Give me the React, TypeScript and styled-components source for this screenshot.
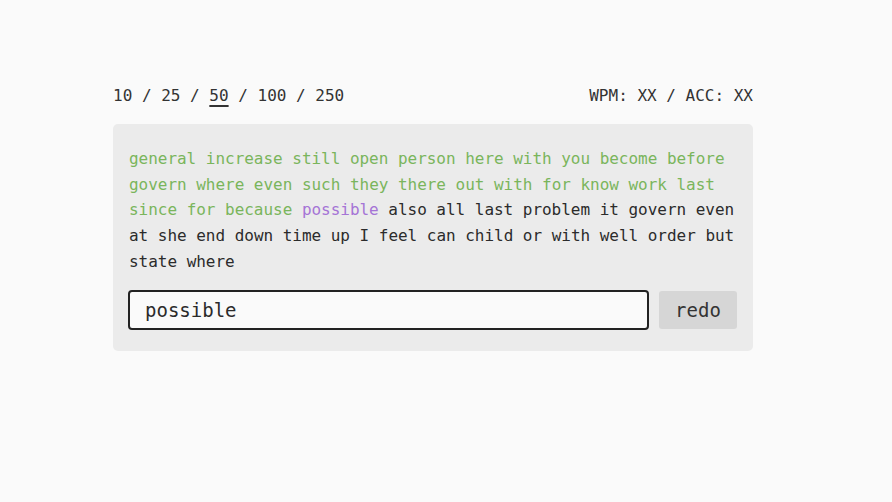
import React from "react";
import styled, { createGlobalStyle } from "styled-components";

const Global = createGlobalStyle`
  html, body { margin: 0; padding: 0; background: #fafafa; }
  body { font-family: "DejaVu Sans Mono", "Liberation Mono", monospace; color: #333; }
`;

const Page = styled.div`
  min-height: 502px;
  padding: 84px 0 0 113px;
  box-sizing: border-box;
`;

const Wrap = styled.div`
  width: 640px;
`;

const TopBar = styled.div`
  display: flex;
  justify-content: space-between;
  align-items: center;
  height: 24px;
  font-size: 16px;
  line-height: 24px;
  color: #333;
  margin-bottom: 16px;
`;

const Counts = styled.div`
  white-space: pre;
`;

const Count = styled.span<{ $active?: boolean }>`
  text-decoration: ${(p) => (p.$active ? "underline" : "none")};
  text-decoration-thickness: 2px;
  text-underline-offset: 4px;
`;

const Stats = styled.div`
  white-space: pre;
`;

const Card = styled.div`
  background: #ebebeb;
  border-radius: 5px;
  padding: 22px 14px 21px 16px;
`;

const Words = styled.div`
  font-size: 16px;
  line-height: 25.7px;
  letter-spacing: -0.03px;
  color: #333;
`;

const Word = styled.span<{ $state: "done" | "current" | "todo" }>`
  color: ${(p) =>
    p.$state === "done" ? "#7ab55c" : p.$state === "current" ? "#a574d6" : "#2b2b2b"};
`;

const InputRow = styled.div`
  display: flex;
  gap: 10px;
  align-items: center;
  margin-top: 15px;
  padding-right: 2px;
`;

const Field = styled.input`
  flex: 1;
  height: 40px;
  box-sizing: border-box;
  border: 2px solid #222;
  border-radius: 4px;
  background: #fafafa;
  padding: 0 15px;
  font-family: inherit;
  font-size: 19px;
  color: #2b2b2b;
  outline: none;
  margin-left: -1px;
`;

const Redo = styled.button`
  width: 78px;
  height: 38px;
  border: none;
  border-radius: 3px;
  background: #d6d6d6;
  font-family: inherit;
  font-size: 19px;
  color: #333;
  cursor: pointer;
`;

const text =
  "general increase still open person here with you become before govern where even such they there out with for know work last since for because possible also all last problem it govern even at she end down time up I feel can child or with well order but state where";

export default function App() {
  const words = text.split(" ");
  const cur = 25;
  const counts = ["10", "25", "50", "100", "250"];
  return (
    <>
      <Global />
      <Page>
        <Wrap>
          <TopBar>
            <Counts>
              {counts.map((c, i) => (
                <React.Fragment key={c}>
                  {i > 0 && " / "}
                  <Count $active={c === "50"}>{c}</Count>
                </React.Fragment>
              ))}
            </Counts>
            <Stats>WPM: XX / ACC: XX</Stats>
          </TopBar>
          <Card>
            <Words>
              {words.map((w, i) => (
                <React.Fragment key={i}>
                  <Word $state={i < cur ? "done" : i === cur ? "current" : "todo"}>{w}</Word>
                  {i < words.length - 1 ? " " : ""}
                </React.Fragment>
              ))}
            </Words>
            <InputRow>
              <Field defaultValue="possible" />
              <Redo>redo</Redo>
            </InputRow>
          </Card>
        </Wrap>
      </Page>
    </>
  );
}
